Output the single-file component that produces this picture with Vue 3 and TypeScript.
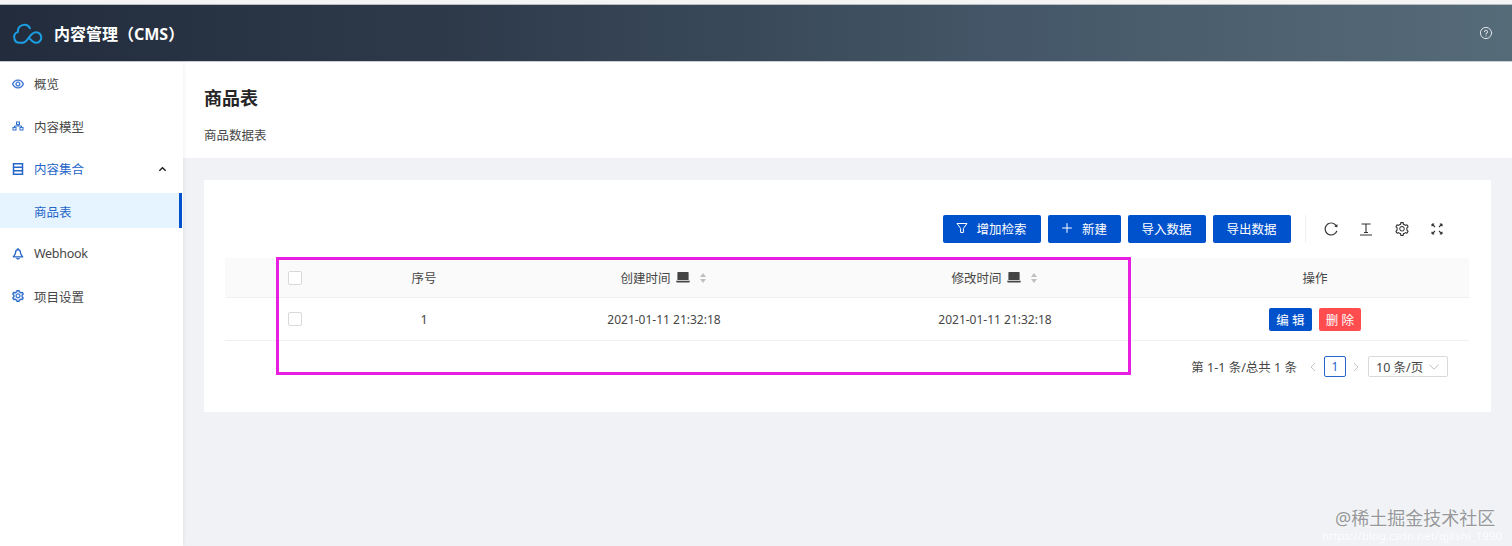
<script setup lang="ts">
interface NavItem {
  label: string
  icon: string
  open?: boolean
  child?: boolean
  active?: boolean
  latin?: boolean
}

const nav: NavItem[] = [
  { label: '概览', icon: 'eye' },
  { label: '内容模型', icon: 'cluster' },
  { label: '内容集合', icon: 'db', open: true },
  { label: '商品表', icon: '', child: true, active: true },
  { label: 'Webhook', icon: 'bell', latin: true },
  { label: '项目设置', icon: 'gear' },
]

const gear =
  'M924.8 625.7l-65.5-56c3.1-19 4.7-38.4 4.7-57.8s-1.6-38.8-4.7-57.8l65.5-56a32.03 32.03 0 0 0 9.3-35.2l-.9-2.6a443.74 443.74 0 0 0-79.7-137.9l-1.8-2.1a32.12 32.12 0 0 0-35.1-9.5l-81.3 28.9c-30-24.6-63.5-44-99.7-57.6l-15.7-85a32.05 32.05 0 0 0-25.8-25.7l-2.7-.5c-52.1-9.4-106.9-9.4-159 0l-2.7.5a32.05 32.05 0 0 0-25.8 25.7l-15.8 85.4a351.86 351.86 0 0 0-99 57.4l-81.9-29.1a32 32 0 0 0-35.1 9.5l-1.8 2.1a446.02 446.02 0 0 0-79.7 137.9l-.9 2.6c-4.5 12.5-.8 26.5 9.3 35.2l66.3 56.6c-3.1 18.8-4.6 38-4.6 57.1 0 19.2 1.5 38.4 4.6 57.1L99 625.5a32.03 32.03 0 0 0-9.3 35.2l.9 2.6c18.1 50.4 44.9 96.9 79.7 137.9l1.8 2.1a32.12 32.12 0 0 0 35.1 9.5l81.9-29.1c29.8 24.5 63.1 43.9 99 57.4l15.8 85.4a32.05 32.05 0 0 0 25.8 25.7l2.7.5a449.4 449.4 0 0 0 159 0l2.7-.5a32.05 32.05 0 0 0 25.8-25.7l15.7-85a350 350 0 0 0 99.7-57.6l81.3 28.9a32 32 0 0 0 35.1-9.5l1.8-2.1c34.8-41.1 61.6-87.5 79.7-137.9l.9-2.6c4.5-12.3.8-26.3-9.3-35zM788.3 465.9c2.5 15.1 3.8 30.6 3.8 46.1s-1.3 31-3.8 46.1l-6.6 40.1 74.7 63.9a370.03 370.03 0 0 1-42.6 73.6L721 702.8l-31.4 25.8c-23.9 19.6-50.5 35-79.3 45.8l-38.1 14.3-17.9 97a377.5 377.5 0 0 1-85 0l-17.9-97.2-37.8-14.5c-28.5-10.8-55-26.2-78.7-45.7l-31.4-25.9-93.4 33.2c-17-22.9-31.2-47.6-42.6-73.6l75.5-64.5-6.5-40c-2.4-14.9-3.7-30.3-3.7-45.5 0-15.3 1.2-30.6 3.7-45.5l6.5-40-75.5-64.5c11.3-26.1 25.6-50.7 42.6-73.6l93.4 33.2 31.4-25.9c23.7-19.5 50.2-34.9 78.7-45.7l37.9-14.3 17.9-97.2c28.1-3.2 56.8-3.2 85 0l17.9 97 38.1 14.3c28.7 10.8 55.4 26.2 79.3 45.8l31.4 25.8 92.8-32.9c17 22.9 31.2 47.6 42.6 73.6L781.8 426l6.5 39.9zM512 326c-97.2 0-176 78.8-176 176s78.8 176 176 176 176-78.8 176-176-78.8-176-176-176zm79.2 255.2A111.6 111.6 0 0 1 512 614c-29.9 0-58-11.7-79.2-32.8A111.6 111.6 0 0 1 400 502c0-29.9 11.7-58 32.8-79.2C454 401.6 482.1 390 512 390c29.9 0 58 11.6 79.2 32.8A111.6 111.6 0 0 1 624 502c0 29.9-11.7 58-32.8 79.2z'
const eye =
  'M942.2 486.2C847.4 286.5 704.1 186 512 186c-192.2 0-335.4 100.5-430.2 300.3a60.3 60.3 0 0 0 0 51.5C176.6 737.5 319.9 838 512 838c192.2 0 335.4-100.5 430.2-300.3 7.7-16.2 7.7-35 0-51.5zM512 766c-161.3 0-279.4-81.8-362.7-254C232.6 339.8 350.7 258 512 258c161.3 0 279.4 81.8 362.7 254C791.5 684.2 673.4 766 512 766zm-4-430c-97.2 0-176 78.8-176 176s78.8 176 176 176 176-78.8 176-176-78.8-176-176-176zm0 288c-61.9 0-112-50.1-112-112s50.1-112 112-112 112 50.1 112 112-50.1 112-112 112z'
const reload =
  'M909.1 209.3l-56.4 44.1C775.8 155.1 656.2 92 521.9 92 290 92 102.3 279.5 102 511.5 101.7 743.7 289.8 932 521.9 932c181.3 0 335.8-115 394.6-276.1 1.5-4.2-.7-8.9-4.9-10.3l-56.7-19.5a8 8 0 0 0-10.1 4.8c-1.8 5-3.8 10-5.9 14.9-17.3 41-42.1 77.8-73.7 109.4A344.77 344.77 0 0 1 655.9 829c-42.3 17.9-87.4 27-133.8 27-46.5 0-91.5-9.1-133.8-27A341.5 341.5 0 0 1 279 755.2a342.16 342.16 0 0 1-73.7-109.4c-17.9-42.4-27-87.4-27-133.9s9.1-91.5 27-133.9c17.3-41 42.1-77.8 73.7-109.4 31.6-31.6 68.4-56.4 109.3-73.8 42.3-17.9 87.4-27 133.8-27 46.5 0 91.5 9.1 133.8 27a341.5 341.5 0 0 1 109.3 73.8c9.9 9.9 19.2 20.4 27.8 31.4l-60.2 47a8 8 0 0 0 3 14.1l175.6 43c5 1.2 9.9-2.6 9.9-7.7l.8-180.9c-.1-6.6-7.8-10.3-13-6.2z'

const columns = [
  { label: '序号', sortable: false },
  { label: '创建时间', sortable: true },
  { label: '修改时间', sortable: true },
]
</script>

<template>
  <div class="page">
    <div class="strip"></div>
    <header class="topbar">
      <div class="brand">
        <svg class="logo" viewBox="0 0 30 21" fill="none" stroke="#1b9ee2" stroke-width="2" stroke-linecap="round" stroke-linejoin="round">
          <path d="M9.5 19.800H6.600A5.600 5.600 0 0 1 5 8.900 A6.400 6.400 0 0 1 17 5.200" />
          <path d="M9.5 19.800C15 19.800 16.500 9.200 23 9.200A5.300 5.300 0 0 1 23 19.800C19.500 19.800 17.800 16.500 15.800 14.600" />
        </svg>
        <span class="brand-name">内容管理（CMS）</span>
      </div>
      <svg class="help" viewBox="0 0 14 14" fill="none" stroke="#dfe5e8" stroke-width="1" stroke-linecap="round">
        <circle cx="7" cy="7" r="5.600" />
        <path d="M5.400 5.700A1.600 1.600 0 1 1 7 7.400V8.200" />
        <path d="M7 10v.2" />
      </svg>
    </header>

    <div class="body">
      <aside class="sidebar">
        <div
          v-for="item in nav"
          :key="item.label"
          class="nav-item"
          :class="{ active: item.active, open: item.open, child: item.child, latin: item.latin }"
        >
          <svg v-if="item.icon === 'eye'" class="nav-icon" viewBox="64 64 896 896" fill="#2566c8" stroke="#2566c8" stroke-width="28"><path :d="eye" /></svg>
          <svg v-else-if="item.icon === 'cluster'" class="nav-icon" viewBox="0 0 12 12" fill="none" stroke="#2f6fce" stroke-width="1">
            <rect x="4.500" y="2" width="3" height="2.600" />
            <rect x="1" y="7.400" width="3" height="2.600" />
            <rect x="8" y="7.400" width="3" height="2.600" />
            <path d="M2.500 7.400V6h7v1.400M6 4.600V6" />
          </svg>
          <svg v-else-if="item.icon === 'db'" class="nav-icon" viewBox="0 0 12 12" fill="none" stroke="#2566c8" stroke-width="1.500">
            <rect x="1.500" y="0.750" width="9" height="10.500" />
            <path d="M1.500 4.250h9M1.500 7.750h9" />
          </svg>
          <svg v-else-if="item.icon === 'bell'" class="nav-icon" viewBox="0 0 12 12" fill="none" stroke="#2566c8" stroke-width="1.300" stroke-linejoin="round" stroke-linecap="round">
            <path d="M6 .6V1.600" />
            <path d="M6 1.600C4.200 1.600 3.500 3.200 3.500 4.800 3.500 6.400 2.400 7.200 1.300 8.800h9.400C9.600 7.200 8.500 6.400 8.500 4.800 8.500 3.200 7.800 1.600 6 1.600Z" />
            <path d="M4.800 10.300C5.200 11.300 6.800 11.300 7.200 10.300" />
          </svg>
          <svg v-else-if="item.icon === 'gear'" class="nav-icon" viewBox="64 64 896 896" fill="#2566c8" stroke="#2566c8" stroke-width="28"><path :d="gear" /></svg>
          <span>{{ item.label }}</span>
          <svg v-if="item.open" class="chevron" viewBox="0 0 10 6" fill="none" stroke="#1f1f1f" stroke-width="1.500"><path d="M1.500 5L5 1.500 8.500 5" /></svg>
        </div>
      </aside>

      <main class="main">
        <section class="page-head">
          <h1>商品表</h1>
          <p>商品数据表</p>
        </section>

        <section class="card">
          <div class="toolbar">
            <button class="btn filter">
              <svg class="btn-icon" viewBox="0 0 12 12" fill="none" stroke="#fff" stroke-width="1" stroke-linejoin="round"><path d="M1 1.500h10L7.400 6.400V10.500H4.600V6.400Z" /></svg>
              <span>增加检索</span>
            </button>
            <button class="btn create">
              <svg class="btn-icon" viewBox="0 0 12 12" fill="none" stroke="#fff" stroke-width="1"><path d="M6 1.200v9.600M1.200 6h9.600" /></svg>
              <span>新建</span>
            </button>
            <button class="btn plain">导入数据</button>
            <button class="btn plain">导出数据</button>
            <div class="divider"></div>
            <svg class="tool" viewBox="64 64 896 896" fill="#333"><path :d="reload" /></svg>
            <svg class="tool" viewBox="0 0 14 14" fill="none" stroke="#333" stroke-width="1.100"><path d="M2.500 2h9M7 2v8.500M5 10.500h4M1 13h12" /></svg>
            <svg class="tool" viewBox="64 64 896 896" fill="#333"><path :d="gear" /></svg>
            <svg class="tool" viewBox="0 0 14 14" fill="none" stroke="#333" stroke-width="1.100"><path d="M2 2l3 3M2 2h2.200M2 2v2.200M12 2L9 5M12 2H9.800M12 2v2.200M2 12l3-3M2 12h2.200M2 12V9.800M12 12L9 9M12 12H9.800M12 12V9.800" /></svg>
          </div>

          <div class="table">
            <div class="row head">
              <div class="cell check"><span class="checkbox"></span></div>
              <div v-for="col in columns" :key="col.label" class="cell" :class="{ sortable: col.sortable }">
                <span>{{ col.label }}</span>
                <svg v-if="col.sortable" class="laptop" viewBox="0 0 14 11" fill="#444">
                  <path d="M2 0h10a.6.6 0 0 1 .6.6V8H1.400V.6A.6.6 0 0 1 2 0Z" />
                  <path d="M0 8.800h14L13.300 10.500H.7Z" />
                </svg>
                <span v-if="col.sortable" class="sorter">
                  <i class="up"></i>
                  <i class="down"></i>
                </span>
              </div>
              <div class="cell">操作</div>
            </div>
            <div class="row data">
              <div class="cell check"><span class="checkbox"></span></div>
              <div class="cell">1</div>
              <div class="cell date">2021-01-11 21:32:18</div>
              <div class="cell date">2021-01-11 21:32:18</div>
              <div class="cell actions">
                <button class="mini edit">编 辑</button>
                <button class="mini del">删 除</button>
              </div>
            </div>
          </div>

          <div class="pager">
            <span class="total">第 1-1 条/总共 1 条</span>
            <svg class="arrow prev" viewBox="0 0 6 10" fill="none" stroke="#c4c4c4" stroke-width="1"><path d="M5 1L1 5l4 4" /></svg>
            <span class="page-no">1</span>
            <svg class="arrow next" viewBox="0 0 6 10" fill="none" stroke="#c4c4c4" stroke-width="1"><path d="M1 1l4 4-4 4" /></svg>
            <span class="size">
              <span>10 条/页</span>
              <svg class="caret" viewBox="0 0 10 6" fill="none" stroke="#bfbfbf" stroke-width="1"><path d="M.5 .8L5 5.200 9.500 .8" /></svg>
            </span>
          </div>
        </section>
      </main>
    </div>

    <div class="annotation"></div>
    <div class="watermark">
      <div class="wm-main">@稀土掘金技术社区</div>
      <div class="wm-sub">https://blog.csdn.net/qjlishi_1990</div>
    </div>
  </div>
</template>

<style>
html,
body {
  margin: 0;
  background: #f0f2f5;
}
</style>

<style scoped>
.page {
  position: relative;
  width: 1512px;
  height: 546px;
  overflow: hidden;
  display: flex;
  flex-direction: column;
  background: #f0f2f5;
  color: #474747;
  font-family: "Noto Sans", "Noto Sans CJK SC", sans-serif;
  font-size: 12.5px;
}
.strip {
  height: 5px;
  flex: none;
  background: #f4f4f4;
  border-bottom: 1px solid #b9bec2;
  box-sizing: border-box;
}
.topbar {
  height: 57px;
  flex: none;
  display: flex;
  align-items: center;
  justify-content: space-between;
  padding: 0 19px 0 13px;
  box-sizing: border-box;
  background: linear-gradient(90deg, #222c3c 0%, #2e3a4a 30%, #46596a 70%, #566b78 100%);
  border-bottom: 1px solid #c8cdd1;
}
.brand {
  display: flex;
  align-items: center;
  gap: 11px;
}
.logo {
  width: 30px;
  height: 21px;
}
.brand-name {
  color: #fff;
  font-size: 16px;
  font-weight: 700;
}
.help {
  width: 14px;
  height: 14px;
}
.body {
  flex: 1;
  display: flex;
  min-height: 0;
}
.sidebar {
  width: 183px;
  flex: none;
  padding-top: 3px;
  background: #fff;
  display: flex;
  flex-direction: column;
  gap: 7.5px;
  box-shadow: 1px 0 4px rgba(0, 21, 41, 0.06);
  z-index: 1;
}
.nav-item {
  height: 35px;
  flex: none;
  display: flex;
  align-items: center;
  gap: 10px;
  padding-left: 12px;
  padding-top: 2px;
  box-sizing: border-box;
}
.nav-item.latin {
  letter-spacing: -0.3px;
}
.nav-icon {
  width: 12px;
  height: 12px;
  flex: none;
}
.nav-item.open {
  color: #2566c8;
}
.nav-item.child {
  padding-left: 34px;
}
.nav-item.active {
  color: #2566c8;
  background: #e6f4ff;
  border-right: 3px solid #0052cc;
  margin-right: 1px;
}
.chevron {
  width: 9px;
  height: 6px;
  margin-left: auto;
  margin-right: 16px;
}
.main {
  flex: 1;
  min-width: 0;
  display: flex;
  flex-direction: column;
}
.page-head {
  height: 96px;
  flex: none;
  box-sizing: border-box;
  padding: 24px 0 0 21px;
  background: #fff;
}
.page-head h1 {
  margin: 0;
  font-size: 18px;
  line-height: 24px;
  font-weight: 700;
  color: #262626;
}
.page-head p {
  margin: 17px 0 0;
  font-size: 12.5px;
  line-height: 18px;
}
.card {
  margin: 22px 21px 0 21px;
  padding: 35px 22px 35px 21px;
  background: #fff;
}
.toolbar {
  display: flex;
  align-items: center;
  justify-content: flex-end;
  height: 28px;
  padding-right: 25px;
}
.btn {
  height: 28px;
  border: none;
  border-radius: 2px;
  background: #0052cc;
  color: #fff;
  font: inherit;
  font-size: 12.5px;
  display: flex;
  align-items: center;
  justify-content: center;
  padding: 0 0 2px;
  margin-right: 7px;
}
.btn.filter {
  width: 98px;
  gap: 8px;
}
.btn.create {
  width: 73px;
  gap: 9px;
}
.btn.plain {
  width: 78px;
}
.btn-icon {
  width: 12px;
  height: 12px;
}
.divider {
  width: 1px;
  height: 28px;
  background: #f0f0f0;
  margin: 0 18px 0 7px;
}
.tool {
  width: 14px;
  height: 14px;
  margin-left: 21.5px;
}
.divider + .tool {
  margin-left: 0;
}
.table {
  margin-top: 15px;
}
.row {
  display: grid;
  grid-template-columns: 124px 150px 330px 332px 308px;
  border-bottom: 1px solid #f0f0f0;
  box-sizing: border-box;
}
.row.head {
  height: 40px;
  background: #fafafa;
}
.row.data {
  height: 43px;
}
.cell {
  display: flex;
  align-items: center;
  justify-content: center;
  gap: 5px;
}
.cell.sortable {
  padding-right: 2px;
}
.cell.date {
  font-size: 12px;
}
.cell.check {
  justify-content: flex-start;
  padding-left: 63px;
}
.checkbox {
  width: 14px;
  height: 14px;
  box-sizing: border-box;
  border: 1px solid #d9d9d9;
  border-radius: 2px;
  background: #fff;
}
.laptop {
  width: 14px;
  height: 11px;
}
.sorter {
  display: flex;
  flex-direction: column;
  gap: 2px;
  margin-left: 5px;
}
.sorter i {
  width: 0;
  height: 0;
  border-left: 3.5px solid transparent;
  border-right: 3.5px solid transparent;
}
.sorter .up {
  border-bottom: 4px solid #bfbfbf;
}
.sorter .down {
  border-top: 4px solid #bfbfbf;
}
.actions {
  gap: 7px;
}
.mini {
  height: 23px;
  border: none;
  border-radius: 2px;
  color: #fff;
  font: inherit;
  font-size: 12.5px;
  padding: 0;
}
.mini.edit {
  width: 43px;
  background: #0052cc;
}
.mini.del {
  width: 42px;
  background: #ff4d4f;
}
.pager {
  margin-top: 15px;
  display: flex;
  align-items: center;
  justify-content: flex-end;
  height: 21px;
  padding-right: 21px;
}
.arrow {
  width: 6px;
  height: 10px;
}
.prev {
  margin-left: 13px;
  margin-right: 8px;
}
.next {
  margin-left: 7px;
  margin-right: 9px;
}
.page-no {
  width: 22px;
  height: 21px;
  box-sizing: border-box;
  border: 1px solid #2566c8;
  border-radius: 2px;
  color: #2566c8;
  display: flex;
  align-items: center;
  justify-content: center;
  font-size: 12px;
}
.size {
  width: 80px;
  height: 21px;
  box-sizing: border-box;
  border: 1px solid #d9d9d9;
  border-radius: 2px;
  display: flex;
  align-items: center;
  justify-content: space-between;
  padding: 0 8px 0 7px;
}
.caret {
  width: 10px;
  height: 6px;
}
.annotation {
  position: absolute;
  left: 276px;
  top: 257px;
  width: 855px;
  height: 118px;
  box-sizing: border-box;
  border: 3px solid #e81fe0;
  pointer-events: none;
  z-index: 2;
}
.watermark {
  position: absolute;
  left: 1335px;
  top: 506px;
  z-index: 3;
}
.wm-main {
  font-size: 18px;
  line-height: 25px;
  color: #96989b;
  white-space: nowrap;
  text-shadow: 0 0 2px #fff;
}
.wm-sub {
  margin-top: -2px;
  margin-left: -13px;
  font-size: 11.5px;
  line-height: 14px;
  color: rgba(255, 255, 255, 0.85);
  white-space: nowrap;
}
</style>
